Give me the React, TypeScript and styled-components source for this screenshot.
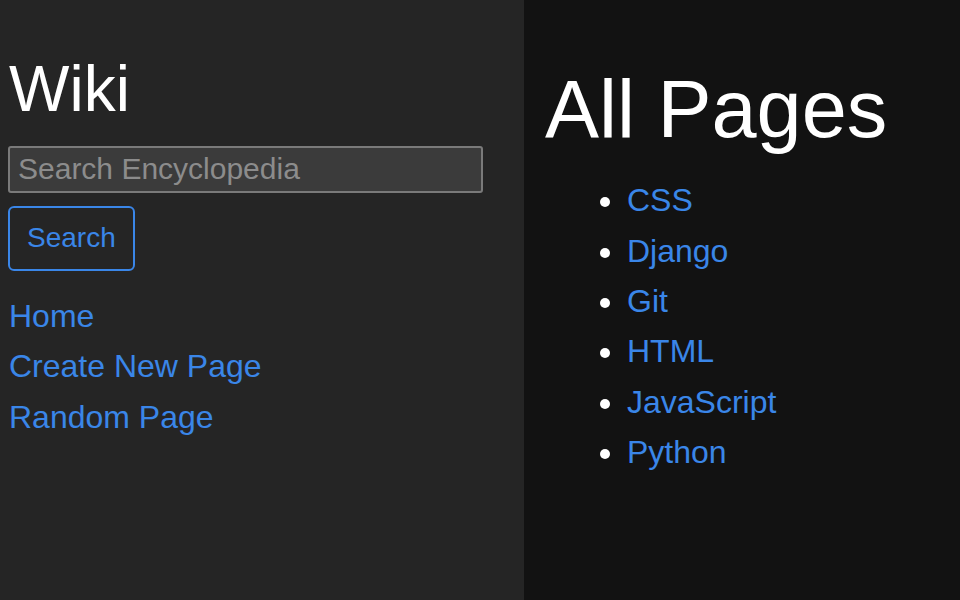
import React from "react";
import styled, { createGlobalStyle } from "styled-components";

const GlobalStyle = createGlobalStyle`
  html, body {
    margin: 0;
    padding: 0;
    background: #121212;
  }
  body {
    font-family: "Liberation Sans", Arial, sans-serif;
    color: #f5f5f5;
  }
`;

const Layout = styled.div`
  display: flex;
  min-height: 600px;
`;

const Sidebar = styled.aside`
  width: 524px;
  flex-shrink: 0;
  box-sizing: border-box;
  background: #252525;
  padding: 51px 41px 0 8px;
`;

const Brand = styled.h2`
  margin: 0 0 18px 1px;
  font-size: 64px;
  font-weight: 400;
  line-height: 1.2;
  color: #ffffff;
`;

const SearchForm = styled.form`
  display: flex;
  flex-direction: column;
  align-items: flex-start;
  gap: 13px;
`;

const SearchInput = styled.input`
  box-sizing: border-box;
  width: 475px;
  height: 47px;
  margin: 0;
  padding: 0 8px;
  font-family: "Liberation Sans", Arial, sans-serif;
  font-size: 30px;
  color: #eeeeee;
  background: #3b3b3b;
  border: 2px solid #7a7a7a;
  border-radius: 3px;
  outline: none;

  &::placeholder {
    color: #8c8c8c;
  }
`;

const SearchButton = styled.button`
  box-sizing: border-box;
  height: 65px;
  padding: 0 17px;
  font-family: "Liberation Sans", Arial, sans-serif;
  font-size: 28px;
  color: #3a86e8;
  background: transparent;
  border: 2px solid #3a86e8;
  border-radius: 6px;
  cursor: pointer;
`;

const NavList = styled.nav`
  display: flex;
  flex-direction: column;
  margin-top: 20px;
`;

const Link = styled.a`
  font-size: 32px;
  line-height: 50.4px;
  color: #3a86e8;
  text-decoration: none;
  margin-left: 1px;
`;

const Main = styled.main`
  flex: 1;
  background: #121212;
  padding: 61px 21px 0 21px;
`;

const Title = styled.h1`
  margin: 0 0 17px;
  font-size: 81px;
  font-weight: 400;
  line-height: 1.2;
  color: #ffffff;
`;

const PageList = styled.ul`
  margin: 0;
  padding-left: 81px;
  color: #ffffff;
`;

const PageItem = styled.li`
  font-size: 32px;
  line-height: 50.4px;
`;

const pages = ["CSS", "Django", "Git", "HTML", "JavaScript", "Python"];

export default function App() {
  return (
    <>
      <GlobalStyle />
      <Layout>
        <Sidebar>
          <Brand>Wiki</Brand>
          <SearchForm onSubmit={(e) => e.preventDefault()}>
            <SearchInput type="text" placeholder="Search Encyclopedia" />
            <SearchButton type="submit">Search</SearchButton>
          </SearchForm>
          <NavList>
            <Link href="#">Home</Link>
            <Link href="#">Create New Page</Link>
            <Link href="#">Random Page</Link>
          </NavList>
        </Sidebar>
        <Main>
          <Title>All Pages</Title>
          <PageList>
            {pages.map((p) => (
              <PageItem key={p}>
                <Link href="#">{p}</Link>
              </PageItem>
            ))}
          </PageList>
        </Main>
      </Layout>
    </>
  );
}
